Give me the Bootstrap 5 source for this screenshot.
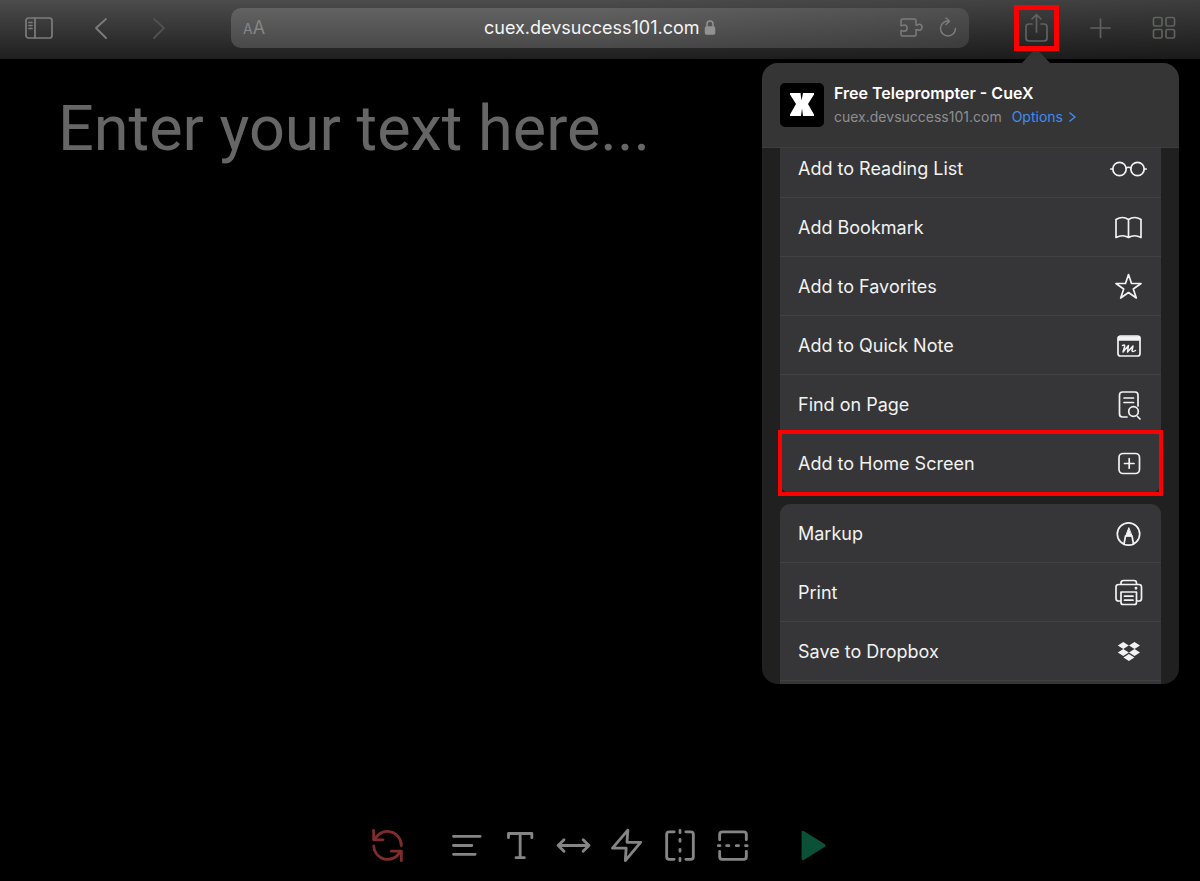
<!DOCTYPE html>
<html lang="en" data-bs-theme="dark">
<head>
<meta charset="utf-8">
<meta name="viewport" content="width=device-width, initial-scale=1">
<title>Free Teleprompter - CueX</title>
<link href="https://cdn.jsdelivr.net/npm/bootstrap@5.3.0/dist/css/bootstrap.min.css" rel="stylesheet">
<style>
  body { background: #000; color: #f2f2f2; font-family: Inter, "Liberation Sans", sans-serif; font-size: 18px; line-height: 24px; }
  svg { display: block; fill: none; stroke: currentColor; stroke-linecap: round; stroke-linejoin: round; }
  .plain { background: none; border: 0; padding: 0; color: inherit; }

  .browser-bar { display: grid; grid-template-columns: 231px 1fr 231px; height: 59px; padding-bottom: 3px;
    color: #7c7c7c; background: linear-gradient(90deg, transparent 50%, rgba(0,8,0,.2)), linear-gradient(#4c4c4c, #1f1f1f); }
  .nav-tools { padding-left: 24px; gap: 40px; }
  .page-tools { padding-right: 23px; gap: 37px; color: #60625f; }
  .address { height: 40px; border-radius: 10px; padding: 0 12px; background: linear-gradient(90deg, transparent 50%, rgba(0,8,0,.2)), linear-gradient(#626262, #494949); }
  .address-side { width: 60px; }
  .address input { width: 216px; color: #f4f4f4; outline: 0; }
  .text-size { font-size: 18px; color: #868686; }
  .text-size span { font-size: 14px; }
  .share-mark { position: relative; }
  .share-mark::after { content: ""; position: absolute; z-index: 3; inset: -7px -8px; border: 5px solid #f00; }

  .prompt { resize: none; outline: 0; width: 100%; padding: 22px 58px; font-family: Roboto, "Liberation Sans", sans-serif; font-size: 63px; line-height: 96px; }
  .prompt::placeholder { color: #666; opacity: 1; }

  .share-sheet { position: absolute; z-index: 2; top: 63px; right: 21px; width: 417px; height: 621px; }
  .sheet-body { border-radius: 16px; background: #202020; }
  .sheet-arrow { position: absolute; right: 127px; bottom: 100%; color: #353535; }
  .sheet-head { height: 85px; padding: 0 18px; gap: 10px; background: #353535; border-bottom: 1px solid #3e3e40; }
  .app-tile { width: 44px; height: 44px; border-radius: 5px; background: #000; color: #fff; }
  .app-title { font-size: 16px; font-weight: 600; color: #fff; }
  .app-url { font-size: 14px; color: #8e8e92; gap: 10px; }
  .app-url button { color: #3f8cf4; gap: 6px; }
  .actions { padding: 0 18px; gap: 11px; margin-top: -9px; }
  .action { position: relative; height: 59px; padding: 2px 13px 0 18px; background: #363638; border-bottom: 1px solid #424244; }
  .action svg { width: 40px; }
  .rows-end .action:last-child { border-bottom-color: transparent; border-radius: 0 0 10px 10px; }
  .rows-start .action:first-child { border-radius: 10px 10px 0 0; }
  .picked::after { content: ""; position: absolute; z-index: 1; inset: -4px -2px; border: 4px solid #f00; }

  .prompter-tools { gap: 40px; padding-bottom: 15px; color: #858585; }
  .prompter-tools > div { gap: 13px; }
  .prompter-tools svg { width: 40px; height: 40px; stroke-width: 1.7; }
</style>
</head>
<body>
<div class="position-relative d-flex flex-column min-vh-100">
  <header class="browser-bar align-items-center">
    <nav class="nav-tools d-flex align-items-center" aria-label="History">
      <button class="plain" aria-label="Sidebar"><svg width="30" height="24" stroke-width="1.7"><rect x="2" y="2" width="26" height="20" rx="2.5"/><path d="M11 2v20M5 6.500h3M5 9.500h3M5 12.500h3"/></svg></button>
      <button class="plain" aria-label="Back"><svg width="14" height="24" stroke-width="1.8"><path d="M12 3 2 12l10 10"/></svg></button>
      <button class="plain ms-1" aria-label="Forward" style="color:#515151"><svg width="14" height="24" stroke-width="1.8"><path d="m2 3 10 9L2 22"/></svg></button>
    </nav>
    <div class="address d-flex align-items-center justify-content-between">
      <button class="plain address-side text-size text-start" aria-label="Text size"><span>A</span>A</button>
      <div class="d-flex align-items-center">
        <input class="plain" type="text" aria-label="Address" value="cuex.devsuccess101.com">
        <svg class="ms-1" width="12" height="18" stroke-width="1.500" style="color:#929292"><path d="M3 8V5a3 3 0 0 1 6 0v3"/><rect x="1.500" y="8" width="9" height="7" rx="1" fill="currentColor"/></svg>
      </div>
      <div class="address-side d-flex align-items-center justify-content-end gap-3">
        <button class="plain" aria-label="Extensions"><svg width="24" height="22" stroke-width="1.500"><path d="M3.500 2h12q1.500 0 1.500 1.500V8c1 .8 1.700-.7 3-.7a3 3 0 0 1 0 6c-1.300 0-2-1.500-3-.7v5q0 1.500-1.500 1.500h-12Q2 19.100 2 17.600v-4c1-.8 1.700.7 3 .7a3.200 3.200 0 0 0 0-6.400c-1.300 0-2 1.500-3 .7V3.500Q2 2 3.500 2z"/></svg></button>
        <button class="plain" aria-label="Reload"><svg width="18" height="22" stroke-width="1.500"><path d="M9 4a7.500 7.500 0 1 0 7.500 7.500M7 1l3.500 3.200L7 7.500"/></svg></button>
      </div>
    </div>
    <nav class="page-tools d-flex align-items-center justify-content-end" aria-label="Page">
      <button class="plain share-mark" aria-label="Share"><svg width="29" height="32" stroke-width="1.700"><path d="M10 12H7q-3 0-3 3v11q0 3 3 3h15q3 0 3-3V15q0-3-3-3h-3M14.500 20V3M10 7l4.500-4.500L19 7"/></svg></button>
      <button class="plain" aria-label="New tab"><svg width="26" height="24" stroke-width="1.700"><path d="M3 12h19M12.500 3v18.500"/></svg></button>
      <button class="plain" aria-label="Tabs"><svg width="26" height="26" stroke-width="1.700"><rect x="2.500" y="2.500" width="8.500" height="8.500" rx="1.500"/><rect x="15" y="2.500" width="8.500" height="8.500" rx="1.500"/><rect x="2.500" y="14.500" width="8.500" height="8.500" rx="1.500"/><rect x="15" y="14.500" width="8.500" height="8.500" rx="1.500"/></svg></button>
    </nav>
  </header>

  <main class="flex-grow-1 d-flex">
    <textarea class="plain prompt" aria-label="Script" placeholder="Enter your text here..."></textarea>
  </main>

  <footer class="prompter-tools d-flex justify-content-center">
    <button class="plain" aria-label="Reset" style="color:#7f2c2c"><svg viewBox="0 0 24 24"><path d="M3.400 2.600v5.700H9M4.100 7.900A8.400 8.400 0 0 1 20 11.700M20 20.800v-5.700h-6M19.200 15.600A8.400 8.400 0 0 1 3.400 12"/></svg></button>
    <div class="d-flex">
      <button class="plain" aria-label="Alignment"><svg viewBox="0 0 24 24"><path d="M3.300 6.200h16M3.300 11.700h11M3.300 17h13"/></svg></button>
      <button class="plain" aria-label="Text"><svg viewBox="0 0 24 24"><path d="M4.500 7V4.500h14V7M11.500 4.500V19M9 19h5"/></svg></button>
      <button class="plain" aria-label="Width"><svg viewBox="0 0 24 24"><path d="M2.500 11.700h18.500M6 8.200l-3.500 3.500L6 15.200M17.500 8.200l3.500 3.500-3.500 3.500"/></svg></button>
      <button class="plain" aria-label="Speed"><svg viewBox="0 0 24 24"><path d="M12.500 2.500 3.300 13.300h8.200L11 20.800l9.200-11H12z"/></svg></button>
      <button class="plain" aria-label="Flip horizontally"><svg viewBox="0 0 24 24"><path d="M8.500 3.500H5.500Q4 3.500 4 5v13.500Q4 20 5.500 20h3M15.500 3.500h3Q20 3.500 20 5v13.500q0 1.500-1.500 1.500h-3M12 2.700v1.300M12 8v1.200M12 14v1.200M12 19.500v1.300"/></svg></button>
      <button class="plain" aria-label="Flip vertically"><svg viewBox="0 0 24 24"><path d="M4 8.300V5q0-1.500 1.500-1.500h13Q20 3.500 20 5v3.300M4 15.300v3.200Q4 20 5.500 20h13q1.500 0 1.500-1.500v-3.200M3.200 11.800h1M8.200 11.800h1.300M14 11.800h1.300M19.500 11.800h1"/></svg></button>
    </div>
    <button class="plain" aria-label="Play" style="color:#0b5138"><svg viewBox="0 0 24 24"><path d="M6 3.700v16l12.700-8z" fill="currentColor"/></svg></button>
  </footer>

  <section class="share-sheet" aria-label="Share">
    <svg class="sheet-arrow" width="32" height="15"><path d="M2 15 14 2q2-2 4 0l12 13z" fill="currentColor" stroke="none"/></svg>
    <div class="sheet-body h-100 overflow-hidden">
      <div class="sheet-head position-relative z-1 d-flex align-items-center">
        <div class="app-tile d-flex align-items-center justify-content-center"><svg width="24" height="24"><path d="M0 0h10.500l1 7.500 1.500-7.500h11v1.500l-6 9.500 6 10.500V23H13l-1-7.500L11 23H0v-1.500L6 11 0 1.500z" fill="currentColor" stroke="none"/></svg></div>
        <div>
          <div class="app-title">Free Teleprompter - CueX</div>
          <div class="app-url d-flex">cuex.devsuccess101.com <button class="plain d-flex align-items-center">Options <svg width="7" height="12" stroke-width="1.500"><path d="m1 2 5 4-5 4"/></svg></button></div>
        </div>
      </div>
      <div class="actions d-flex flex-column">
        <div class="rows-end d-flex flex-column">
          <button class="plain action d-flex align-items-center justify-content-between">Add to Reading List <svg height="30" stroke-width="1.700"><circle cx="11.500" cy="15" r="6.700"/><circle cx="29.500" cy="15" r="6.700"/><path d="M18 14q2.500-1.500 5 0M2.800 15h2M36.200 15h2"/></svg></button>
          <button class="plain action d-flex align-items-center justify-content-between">Add Bookmark <svg height="30" stroke-width="1.700"><path d="M20.500 6.500q-6-4-12.500 0v18q6.500-3.500 12.500 0 6-3.500 12.500 0v-18q-6.500-4-12.500 0zv18"/></svg></button>
          <button class="plain action d-flex align-items-center justify-content-between">Add to Favorites <svg height="30" stroke-width="1.700"><path d="m20.500 2.500 3 9h9.500l-7.700 5.500 3 9-7.800-5.500-7.800 5.500 3-9L8 11.500h9.500z"/></svg></button>
          <button class="plain action d-flex align-items-center justify-content-between">Add to Quick Note <svg height="30" stroke-width="1.700"><rect x="10" y="5" width="22" height="20" rx="2.500"/><path d="M10.500 6h21v3h-21z" fill="currentColor"/><path stroke-width="1.500" d="M14.500 14.500q3-1.500 2 1.500l-1.500 5 5.500-6.500-1 6.500 5.500-6-1 4.500q.5 2 3.500 0"/></svg></button>
          <button class="plain action d-flex align-items-center justify-content-between">Find on Page <svg height="30" stroke-width="1.700"><path d="M19 27h-4.500q-3 0-3-3V5q0-3 3-3h12.500q3 0 3 3v11M16 8h9.500M16 12.500h9.500M29.500 26.500l2.500 2.500"/><circle cx="25.500" cy="21.500" r="4.800"/></svg></button>
          <button class="plain action picked d-flex align-items-center justify-content-between">Add to Home Screen <svg height="30" stroke-width="1.700"><rect x="11" y="4.500" width="20.500" height="20" rx="4"/><path d="M16.500 14.500h9.500M21.200 9.700v9.500"/></svg></button>
        </div>
        <div class="rows-start d-flex flex-column">
          <button class="plain action d-flex align-items-center justify-content-between">Markup <svg height="30" stroke-width="1.700"><circle cx="20.500" cy="15" r="11.200"/><path d="m16 25 1.500-8h6.500l1.500 8"/><path stroke-width="1" d="m20.700 9-3 8h6z" fill="currentColor"/></svg></button>
          <button class="plain action d-flex align-items-center justify-content-between">Print <svg height="30" stroke-width="1.700"><path d="M13 6V5q0-2.500 2.500-2.500h10.500q2.500 0 2.500 2.500v1M12.500 23H10.500q-2.500 0-2.500-2.500V9q0-2.500 2.500-2.500h20.500q2.500 0 2.500 2.500v11.500q0 2.500-2.500 2.500h-2M13 14h15.500v10.500q0 2-2 2H15q-2 0-2-2zM16.500 18.200h8.500M16.500 22.200h8.500"/><circle cx="28" cy="10.300" r=".6"/></svg></button>
          <button class="plain action d-flex align-items-center justify-content-between">Save to Dropbox <svg height="30"><path d="m15.300 5 5.500 3.500-5.500 3.500-5.500-3.500zM26.500 5l5.500 3.500-5.500 3.500-5.500-3.500zM15.300 12l5.500 3.500-5.500 3.500-5.500-3.500zM26.500 12l5.500 3.500-5.500 3.500-5.500-3.500zM20.900 17l5.500 3.500-5.500 3.500-5.500-3.500z" fill="currentColor" stroke="none"/></svg></button>
          <button class="plain action" aria-label="More actions"></button>
        </div>
      </div>
    </div>
  </section>
</div>
<script src="https://cdn.jsdelivr.net/npm/bootstrap@5.3.0/dist/js/bootstrap.bundle.min.js"></script>
</body>
</html>
